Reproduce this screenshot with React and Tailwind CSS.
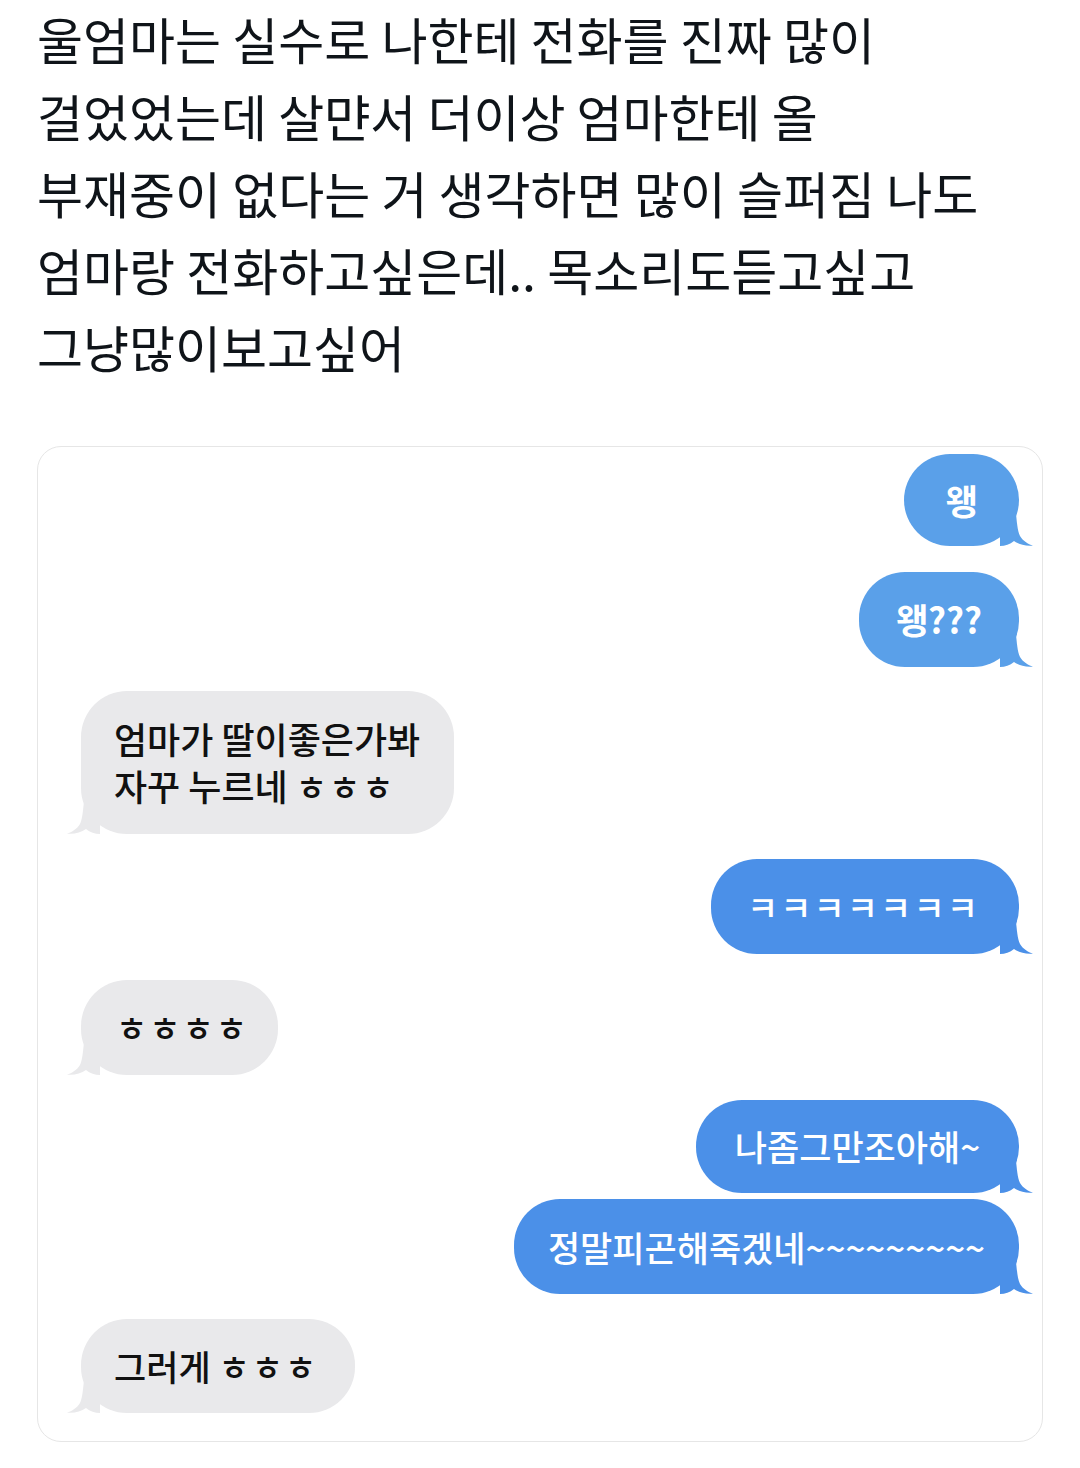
import React from "react";

const FONT = { fontFamily: '"Noto Sans CJK KR", "Noto Sans", sans-serif' };

function Tail({ side, color }) {
  const pos = side === "right" ? "right-[-15px]" : "left-[-15px] -scale-x-100";
  return (
    <svg
      className={`absolute bottom-0 ${pos}`}
      width="34"
      height="40"
      viewBox="0 0 34 40"
      fill={color}
    >
      <path d="M0,0 L14,0 C17,4 16,22 20,30 C23,35 28,38 33,39.6 C26,40.4 19,38.5 14,35 C10,38.5 5,40 0,40 Z" />
    </svg>
  );
}

function Bubble({ side, color, className, children }) {
  const align = side === "right" ? "self-end" : "self-start";
  return (
    <div className={`relative ${align} ${className}`} style={{ backgroundColor: color }}>
      {children}
      <Tail side={side} color={color} />
    </div>
  );
}

const J = ({ children, className = "" }) => (
  <span className={`text-[34px] font-medium tracking-[2px] ${className}`}>{children}</span>
);

export default function App() {
  const blue1 = "#5aa0e9";
  const blue2 = "#4b90e8";
  const gray = "#e9e9eb";
  return (
    <div className="w-[1080px] min-h-[1468px] bg-white" style={FONT}>
      <div className="px-[37px] pt-[0px] text-[50px] leading-[77px] text-[#0f1419]">
        <div>울엄마는 실수로 나한테 전화를 진짜 많이</div>
        <div>걸었었는데 살먄서 더이상 엄마한테 올</div>
        <div>부재중이 없다는 거 생각하면 많이 슬퍼짐 나도</div>
        <div>엄마랑 전화하고싶은데.. 목소리도듣고싶고</div>
        <div>그냥많이보고싶어</div>
      </div>

      <div className="mx-[37px] mt-[61px] h-[996px] rounded-[24px] border border-[#e6e6e6] flex flex-col pt-[7px] pr-[23px] pl-[43px] pb-[28px]">
        <Bubble
          side="right"
          color={blue1}
          className="w-[115px] h-[92px] rounded-[46px] flex items-center justify-center text-white text-[35px] font-semibold"
        >
          왱
        </Bubble>
        <Bubble
          side="right"
          color={blue1}
          className="mt-[26px] w-[160px] h-[95px] rounded-[46px] flex items-center justify-center text-white text-[35px] font-semibold"
        >
          왱???
        </Bubble>
        <Bubble
          side="left"
          color={gray}
          className="mt-[24px] w-[373px] h-[144px] rounded-[46px] flex flex-col justify-center pl-[33px] text-[#111] text-[36px] leading-[47px] font-medium"
        >
          <div>엄마가 딸이좋은가봐</div>
          <div>
            자꾸 누르네 <J>ㅎㅎㅎ</J>
          </div>
        </Bubble>
        <Bubble
          side="right"
          color={blue2}
          className="mt-[25px] w-[308px] h-[95px] rounded-[46px] flex items-center pl-[36px] text-white"
        >
          <J>ㅋㅋㅋㅋㅋㅋㅋ</J>
        </Bubble>
        <Bubble
          side="left"
          color={gray}
          className="mt-[26px] w-[197px] h-[95px] rounded-[46px] flex items-center pl-[35px] text-[#111]"
        >
          <J>ㅎㅎㅎㅎ</J>
        </Bubble>
        <Bubble
          side="right"
          color={blue2}
          className="mt-[25px] w-[323px] h-[94px] rounded-[46px] flex items-center justify-center text-white text-[35px] font-medium"
        >
          나좀그만조아해~
        </Bubble>
        <Bubble
          side="right"
          color={blue2}
          className="mt-[6px] w-[505px] h-[95px] rounded-[46px] flex items-center justify-center text-white text-[35px] font-medium"
        >
          정말피곤해죽겠네~~~~~~~~~
        </Bubble>
        <Bubble
          side="left"
          color={gray}
          className="mt-[25px] w-[274px] h-[94px] rounded-[46px] flex items-center pl-[33px] text-[#111] text-[35px] font-medium"
        >
          그러게&nbsp;<J>ㅎㅎㅎ</J>
        </Bubble>
      </div>
    </div>
  );
}
